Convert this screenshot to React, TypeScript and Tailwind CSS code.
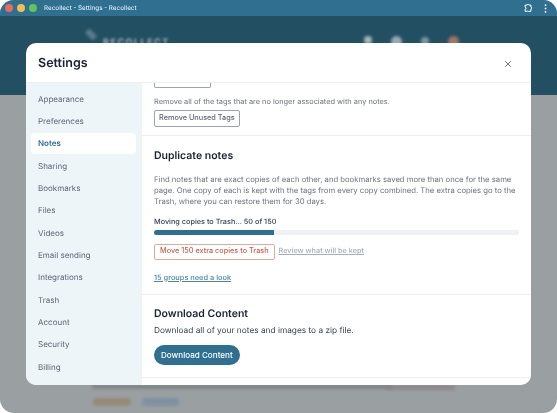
import { X } from "lucide-react";

const font = { fontFamily: "Inter, sans-serif" };
const items = ["Appearance","Preferences","Notes","Sharing","Bookmarks","Files","Videos","Email sending","Integrations","Trash","Account","Security","Billing"];

export default function App() {
  return (
    <div className="relative w-[557px] h-[413px] overflow-hidden bg-white [text-rendering:geometricPrecision] blur-[0.3px]" style={font}>
      <div className="relative w-full h-full rounded-[14px] overflow-hidden bg-[#9a9fa2] flex flex-col">
        <div className="h-[16px] shrink-0 bg-[#2f6f8f] flex items-center pl-[5px] pr-[10px]">
          <div className="flex gap-[4px] items-center">
            <span className="w-[8px] h-[8px] rounded-full bg-[#ea6a5e]" />
            <span className="w-[8px] h-[8px] rounded-full bg-[#f5bd4f]" />
            <span className="w-[8px] h-[8px] rounded-full bg-[#62c554]" />
          </div>
          <span className="ml-[7px] text-[6.3px] font-medium text-[#dbe8ee] leading-none">Recollect - Settings - Recollect</span>
          <div className="ml-auto flex items-center gap-[11px]">
            <svg width="10" height="10" viewBox="0 0 24 24" fill="none" stroke="#fff" strokeWidth="2.4" strokeLinejoin="round">
              <path d="M5 5h5a2 2 0 0 1 4 0h5v5a2 2 0 0 1 0 4v6h-6a2 2 0 0 0-3 0H5v-5a2 2 0 0 0 0-5z" />
            </svg>
            <svg width="3" height="9" viewBox="0 0 3 9" fill="#fff"><circle cx="1.5" cy="1.2" r="0.9"/><circle cx="1.5" cy="4.5" r="0.9"/><circle cx="1.5" cy="7.8" r="0.9"/></svg>
          </div>
        </div>
        <div className="h-[79px] shrink-0 bg-[#234f63]" />
        <div className="absolute left-[88px] top-[29px] w-[6px] h-[11px] bg-[#7d9cab] -rotate-45 blur-[1.5px] opacity-60" />
        <div className="absolute left-[103px] top-[36px] text-[9px] font-bold tracking-[1.5px] text-[#9db0b9] blur-[1.2px]">RECOLLECT</div>
        <div className="absolute left-[364px] top-[36px] w-[8px] h-[8px] rounded-full bg-[#a9b7bd] blur-[1.5px]" />
        <div className="absolute left-[391px] top-[36px] w-[11px] h-[11px] rounded-full bg-[#97abb3] blur-[1.5px]" />
        <div className="absolute left-[421px] top-[37px] w-[8px] h-[8px] rounded-full bg-[#7c97a3] blur-[1.5px]" />
        <div className="absolute left-[448px] top-[36px] w-[11px] h-[11px] rounded-full bg-[#a07763] blur-[1.5px]" />
        <div className="absolute left-[92px] top-[384px] w-[300px] h-[5px] bg-[#777c7f] blur-[1.5px] opacity-70" />
        <div className="absolute left-[385px] top-[385px] w-[70px] h-[5px] bg-[#85817f] blur-[1.5px] opacity-70" />
        <div className="absolute left-[93px] top-[398px] w-[38px] h-[8px] rounded bg-[#948b78] blur-[1.5px]" />
        <div className="absolute left-[142px] top-[398px] w-[37px] h-[8px] rounded bg-[#7f90a1] blur-[1.5px]" />
      </div>

      <div className="absolute left-[26px] top-[43px] w-[505px] h-[342px] bg-white rounded-[10px] overflow-hidden flex flex-col">
        <div className="h-[40px] shrink-0 border-b border-[#edf0f2] flex items-center justify-between pl-[12px] pr-[18px] pt-[2px]">
          <span className="mt-[2px] text-[12.5px] font-semibold text-[#1a2233]">Settings</span>
          <X size={10} strokeWidth={2} className="text-[#4b5563]" />
        </div>
        <div className="flex flex-1 min-h-0">
          <nav className="w-[116px] shrink-0 bg-[#eef5f9] pt-[5px] pl-[5px] pr-[6px] flex flex-col gap-[1.35px]">
            {items.map((t) => (
              <div key={t} className={t === "Notes"
                ? "h-[21px] rounded-[4px] bg-white pl-[7px] flex items-center text-[8px] font-semibold text-[#2f6f8f]"
                : "h-[21px] pl-[7px] flex items-center text-[8px] text-[#5c6672]"}>{t}</div>
            ))}
          </nav>
          <div className="flex-1 min-w-0 overflow-hidden">
            <section className="border-b border-[#edf0f2] pl-[12px] h-[53px]">
              <div className="w-[57px] h-[5px] border border-t-0 border-[#9aa3b2] rounded-b-[2px]" />
              <p className="mt-[8px] text-[7.4px] leading-[11px] text-[#6b7280]">Remove all of the tags that are no longer associated with any notes.</p>
              <button className="block mt-[3px] h-[17px] px-[4px] border border-[#9aa3b2] rounded-[2px] text-[7.3px] font-medium text-[#5c6672]">Remove Unused Tags</button>
            </section>
            <section className="border-b border-[#edf0f2] pl-[12px] pr-[12px] h-[159px] pt-[13px]">
              <h2 className="text-[10.5px] leading-[14px] font-semibold text-[#1a2233]">Duplicate notes</h2>
              <p className="mt-[11px] text-[7.7px] leading-[11.2px] text-[#6b7280]">Find notes that are exact copies of each other, and bookmarks saved more than once for the same page. One copy of each is kept with the tags from every copy combined. The extra copies go to the Trash, where you can restore them for 30 days.</p>
              <p className="mt-[8px] text-[7.3px] leading-[11px] font-medium text-[#374151]">Moving copies to Trash... 50 of 150</p>
              <div className="mt-[3px] h-[5px] rounded-full bg-[#eff1f6] overflow-hidden">
                <div className="h-full bg-[#2f6f8f]" style={{ width: "33%" }} />
              </div>
              <div className="mt-[9px] flex items-center gap-[4px]">
                <button className="h-[16px] px-[5px] border border-[#e3a99d] rounded-[2px] text-[7.3px] font-medium text-[#c9604e]">Move 150 extra copies to Trash</button>
                <span className="text-[7.3px] font-medium text-[#a5adb9] underline">Review what will be kept</span>
              </div>
              <p className="mt-[12px] text-[7.4px] leading-[11px] font-medium text-[#4a86a4] underline">15 groups need a look</p>
            </section>
            <section className="border-b border-[#edf0f2] pl-[12px] h-[83px] pt-[12px]">
              <h2 className="text-[10.5px] leading-[14px] font-semibold text-[#1a2233]">Download Content</h2>
              <p className="mt-[5px] text-[8.3px] leading-[11px] text-[#374151]">Download all of your notes and images to a zip file.</p>
              <button className="mt-[8px] h-[20px] px-[7px] rounded-full bg-[#2f6f8f] text-[8.1px] font-medium text-white">Download Content</button>
            </section>
          </div>
        </div>
      </div>
    </div>
  );
}
